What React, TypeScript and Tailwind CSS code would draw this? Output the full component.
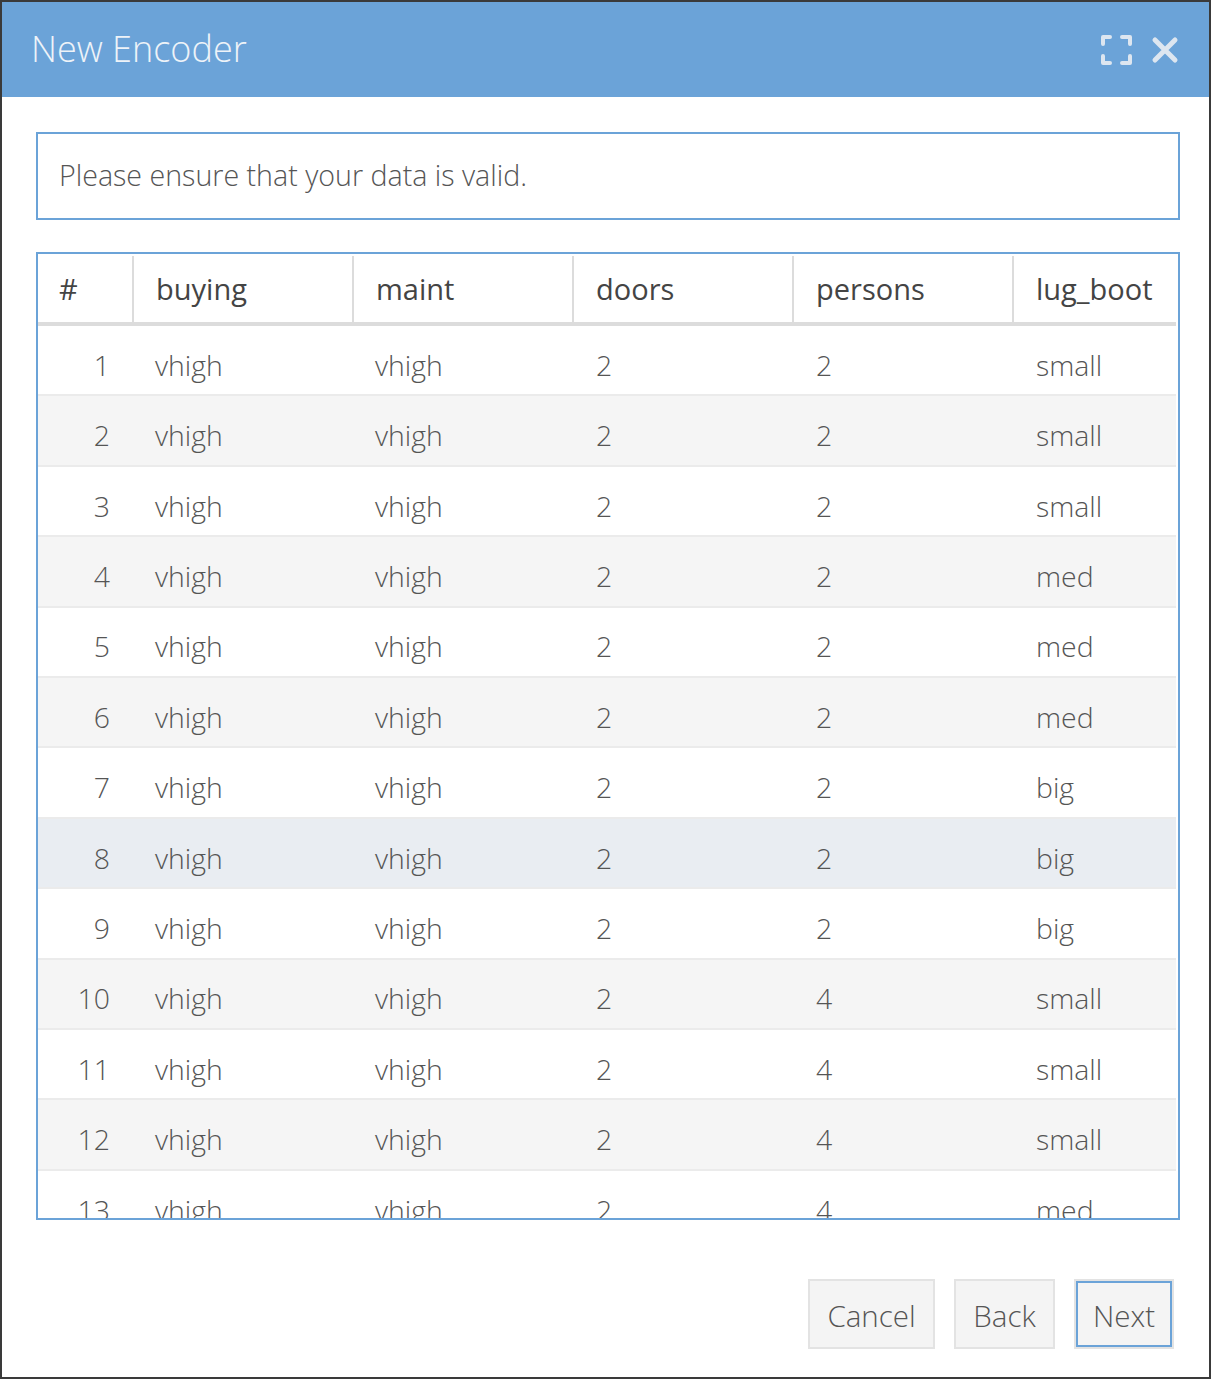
import React from 'react';

const rows = [
  { n: 1, persons: '2', lug: 'small' },
  { n: 2, persons: '2', lug: 'small' },
  { n: 3, persons: '2', lug: 'small' },
  { n: 4, persons: '2', lug: 'med' },
  { n: 5, persons: '2', lug: 'med' },
  { n: 6, persons: '2', lug: 'med' },
  { n: 7, persons: '2', lug: 'big' },
  { n: 8, persons: '2', lug: 'big' },
  { n: 9, persons: '2', lug: 'big' },
  { n: 10, persons: '4', lug: 'small' },
  { n: 11, persons: '4', lug: 'small' },
  { n: 12, persons: '4', lug: 'small' },
  { n: 13, persons: '4', lug: 'med' },
];

const columns = ['buying', 'maint', 'doors', 'persons'];

function ExpandIcon() {
  return (
    <svg width="34" height="32" viewBox="0 0 34 32" fill="none" stroke="#dde6f0" strokeWidth="4" strokeLinecap="round" strokeLinejoin="round">
      <path d="M4 10V3h7" />
      <path d="M23 3h8v7" />
      <path d="M31 22v7h-8" />
      <path d="M11 29H4v-7" />
    </svg>
  );
}

function CloseIcon() {
  return (
    <svg width="28" height="28" viewBox="0 0 28 28" fill="none" stroke="#dde6f0" strokeWidth="5" strokeLinecap="round">
      <path d="M4 4l20 20M24 4L4 24" />
    </svg>
  );
}

export default function App() {
  return (
    <div className="w-[1211px] h-[1379px] border-2 border-[#3a3a3a] bg-white font-['Open_Sans',sans-serif] text-[#555]">
      {/* Title bar */}
      <div className="h-[95px] bg-[#6ba3d8] flex items-center justify-between pl-[29px] pr-[30px]">
        <span className="text-[36px] font-light text-[#eef3f8] leading-none -mt-[1px]">New Encoder</span>
        <div className="flex items-center gap-[18px]">
          <ExpandIcon />
          <CloseIcon />
        </div>
      </div>

      {/* Info message */}
      <div className="ml-[34px] mt-[35px] w-[1144px] h-[88px] border-2 border-[#6ba3d8] flex items-center pl-[21px]">
        <span className="text-[28.6px] font-light text-[#555] -mt-[2px]">Please ensure that your data is valid.</span>
      </div>

      {/* Data table */}
      <div className="ml-[34px] mt-[32px] w-[1144px] h-[968px] border-2 border-[#6ba3d8] overflow-hidden">
        <div className="w-[1138px]">
          <div className="flex h-[72px] pt-[2px] border-b-4 border-[#dcdcdc] text-[29px] text-[#444]">
            <div className="w-[96px] border-r-2 border-[#dcdcdc] flex items-center pl-[21px]">#</div>
            {columns.map((c) => (
              <div key={c} className="w-[220px] border-r-2 border-[#dcdcdc] flex items-center pl-[22px]">
                {c}
              </div>
            ))}
            <div className="flex-1 flex items-center pl-[22px]">lug_boot</div>
          </div>
          {rows.map((r) => (
            <div
              key={r.n}
              className={
                'flex h-[70.4px] pt-[10px] border-b-2 border-[#ebebeb] text-[28.4px] font-light text-[#555] ' +
                (r.n === 8 ? 'bg-[#e9edf2]' : r.n % 2 === 0 ? 'bg-[#f5f5f5]' : 'bg-white')
              }
            >
              <div className="w-[96px] flex items-center justify-end pr-[24px]">{r.n}</div>
              <div className="w-[220px] flex items-center pl-[21px]">vhigh</div>
              <div className="w-[220px] flex items-center pl-[21px]">vhigh</div>
              <div className="w-[220px] flex items-center pl-[22px]">2</div>
              <div className="w-[220px] flex items-center pl-[22px]">{r.persons}</div>
              <div className="flex-1 flex items-center pl-[22px]">{r.lug}</div>
            </div>
          ))}
        </div>
      </div>

      {/* Footer buttons */}
      <div className="flex justify-end gap-[19px] mt-[59px] mr-[35px]">
        <button className="w-[127px] h-[70px] pt-[4px] bg-[#f4f4f4] border-2 border-[#e3e3e3] text-[29.5px] font-light text-[#555]">Cancel</button>
        <button className="w-[101px] h-[70px] pt-[4px] bg-[#f4f4f4] border-2 border-[#e3e3e3] text-[29.5px] font-light text-[#555]">Back</button>
        <button className="w-[100px] h-[70px] pt-[4px] bg-[#f4f4f4] border-2 border-[#e3e3e3] outline-2 outline-[#6ba3d8] -outline-offset-4 text-[29.5px] font-light text-[#555]">Next</button>
      </div>
    </div>
  );
}
